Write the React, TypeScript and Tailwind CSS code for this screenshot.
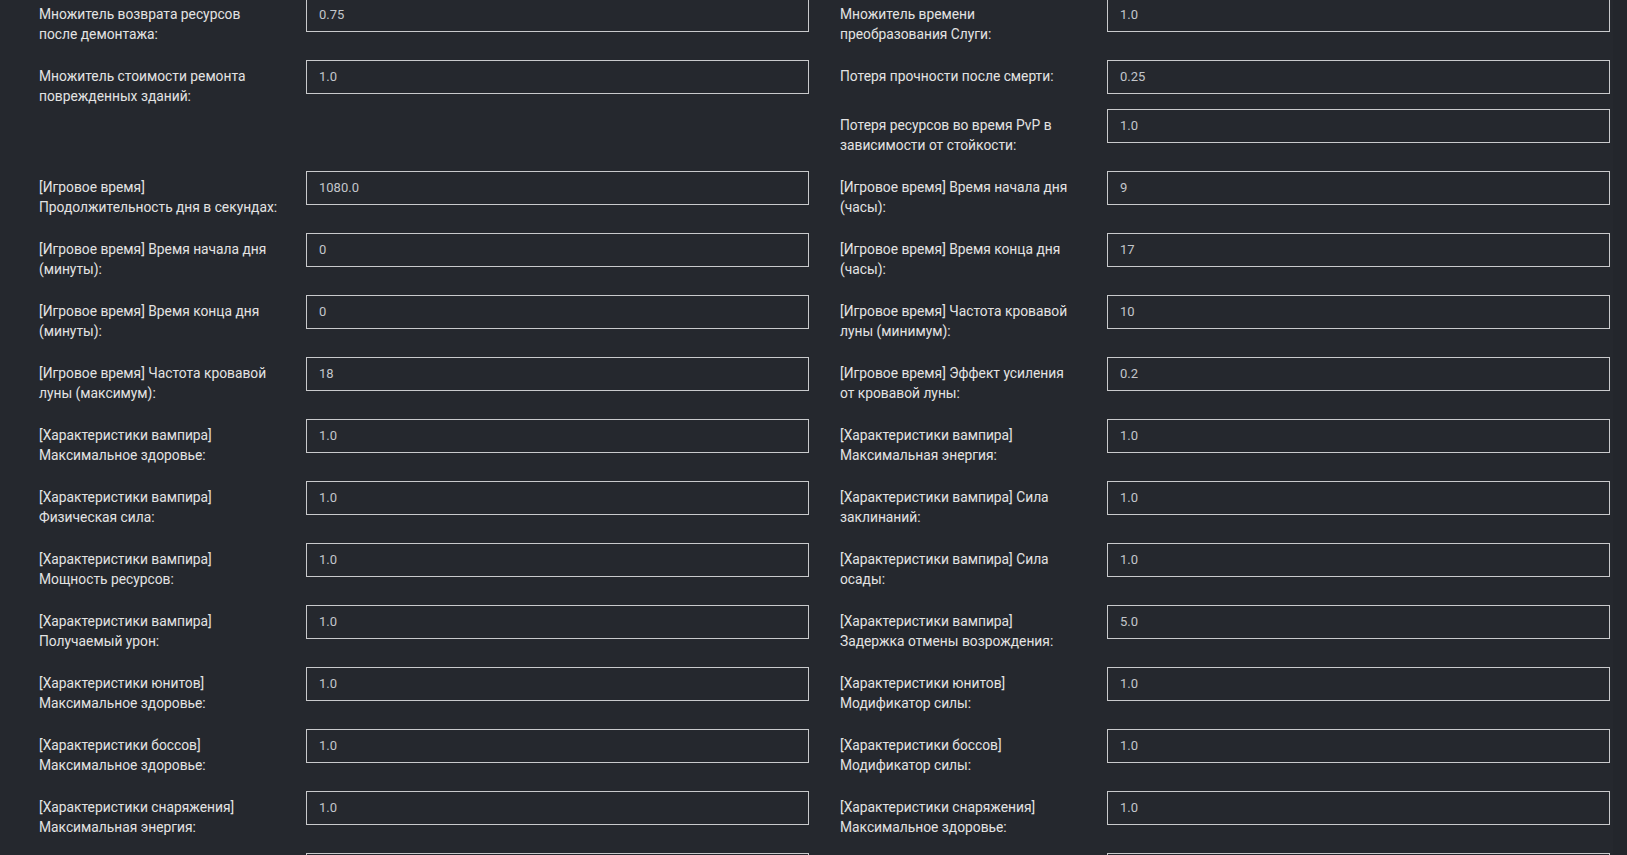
import React from "react";

type Item = { lines: string[]; value: string };

const sec1Left: Item[] = [
  { lines: ["Множитель возврата ресурсов", "после демонтажа:"], value: "0.75" },
  { lines: ["Множитель стоимости ремонта", "поврежденных зданий:"], value: "1.0" },
];

const sec1Right: Item[] = [
  { lines: ["Множитель времени", "преобразования Слуги:"], value: "1.0" },
  { lines: ["Потеря прочности после смерти:"], value: "0.25" },
  { lines: ["Потеря ресурсов во время PvP в", "зависимости от стойкости:"], value: "1.0" },
];

const sec2Left: Item[] = [
  { lines: ["[Игровое время]", "Продолжительность дня в секундах:"], value: "1080.0" },
  { lines: ["[Игровое время] Время начала дня", "(минуты):"], value: "0" },
  { lines: ["[Игровое время] Время конца дня", "(минуты):"], value: "0" },
  { lines: ["[Игровое время] Частота кровавой", "луны (максимум):"], value: "18" },
  { lines: ["[Характеристики вампира]", "Максимальное здоровье:"], value: "1.0" },
  { lines: ["[Характеристики вампира]", "Физическая сила:"], value: "1.0" },
  { lines: ["[Характеристики вампира]", "Мощность ресурсов:"], value: "1.0" },
  { lines: ["[Характеристики вампира]", "Получаемый урон:"], value: "1.0" },
  { lines: ["[Характеристики юнитов]", "Максимальное здоровье:"], value: "1.0" },
  { lines: ["[Характеристики боссов]", "Максимальное здоровье:"], value: "1.0" },
  { lines: ["[Характеристики снаряжения]", "Максимальная энергия:"], value: "1.0" },
  { lines: [], value: "" },
];

const sec2Right: Item[] = [
  { lines: ["[Игровое время] Время начала дня", "(часы):"], value: "9" },
  { lines: ["[Игровое время] Время конца дня", "(часы):"], value: "17" },
  { lines: ["[Игровое время] Частота кровавой", "луны (минимум):"], value: "10" },
  { lines: ["[Игровое время] Эффект усиления", "от кровавой луны:"], value: "0.2" },
  { lines: ["[Характеристики вампира]", "Максимальная энергия:"], value: "1.0" },
  { lines: ["[Характеристики вампира] Сила", "заклинаний:"], value: "1.0" },
  { lines: ["[Характеристики вампира] Сила", "осады:"], value: "1.0" },
  { lines: ["[Характеристики вампира]", "Задержка отмены возрождения:"], value: "5.0" },
  { lines: ["[Характеристики юнитов]", "Модификатор силы:"], value: "1.0" },
  { lines: ["[Характеристики боссов]", "Модификатор силы:"], value: "1.0" },
  { lines: ["[Характеристики снаряжения]", "Максимальное здоровье:"], value: "1.0" },
  { lines: [], value: "" },
];

function Field({ item }: { item: Item }) {
  return (
    <div className="flex items-start mb-[15px]">
      <label className="w-[267px] shrink-0 pt-[6px] pb-[1px] text-[13.8px] leading-[20px] text-[#e3e3e3]">
        {item.lines.map((l, i) => (
          <span key={i} className="block whitespace-nowrap">
            {l}
          </span>
        ))}
      </label>
      <input
        readOnly
        value={item.value}
        className="flex-1 min-w-0 h-[34px] border border-[#c9cacc] bg-[#25282e] px-[12px] pb-[2px] text-[13px] text-[#c3c6cb] outline-none"
        style={{ fontFamily: "Roboto, 'Noto Sans', sans-serif" }}
      />
    </div>
  );
}

function Column({ items }: { items: Item[] }) {
  return (
    <div className="w-[770px] flex flex-col">
      {items.map((it, i) => (
        <Field key={i} item={it} />
      ))}
    </div>
  );
}

export default function App() {
  return (
    <div
      className="h-[855px] w-full overflow-hidden bg-[#25282e] flex"
      style={{ fontFamily: "Roboto, 'Noto Sans', sans-serif" }}
    >
      <div className="flex-1 pl-[39px] pr-[3px]">
        <div className="-mt-[2px] flex gap-[31px]">
          <Column items={sec1Left} />
          <Column items={sec1Right} />
        </div>
        <div className="flex gap-[31px]">
          <Column items={sec2Left} />
          <Column items={sec2Right} />
        </div>
      </div>
      <div className="w-[14px] shrink-0 bg-[#23262c]" />
    </div>
  );
}
